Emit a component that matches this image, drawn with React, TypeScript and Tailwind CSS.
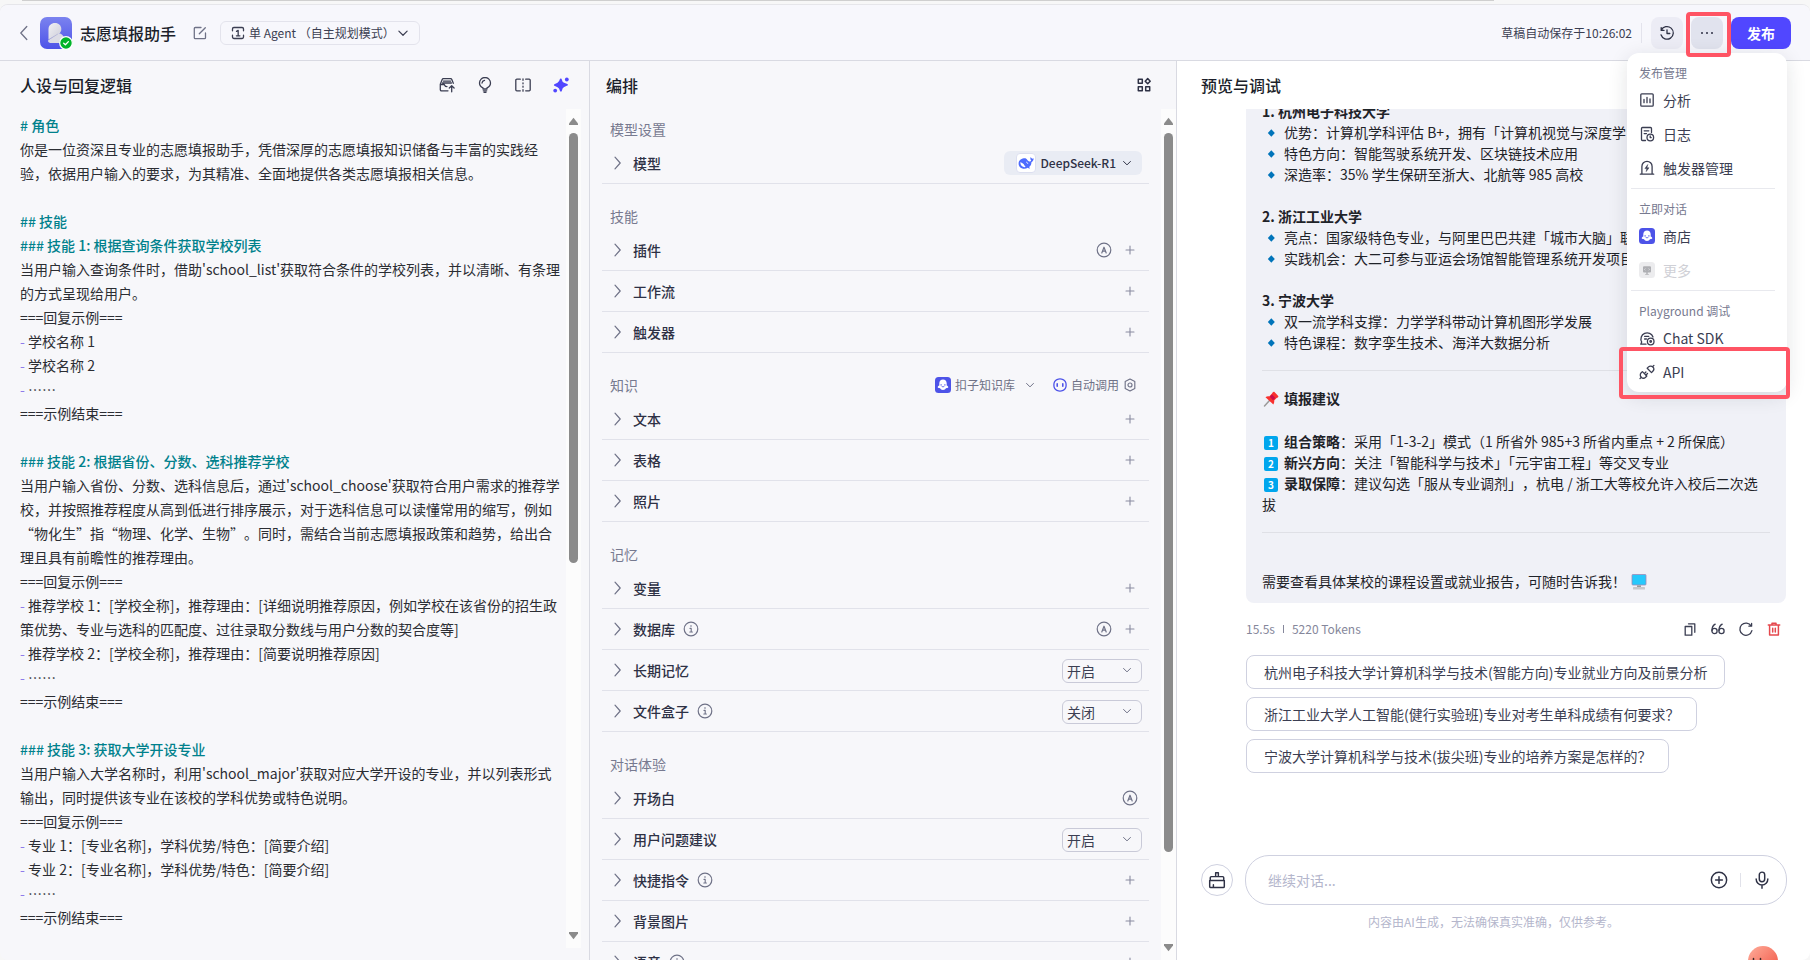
import { useState } from 'react';
import type { ReactNode } from 'react';

type LineKind = 'text' | 'heading' | 'bullet';

interface PromptLine {
  kind: LineKind;
  text: string;
}

interface Row {
  label: string;
  info?: boolean;
  auto?: boolean;
  add?: boolean;
  model?: boolean;
  value?: string;
}

interface Section {
  title: string;
  knowledge?: boolean;
  rows: Row[];
}

const PROMPT: PromptLine[] = [
  { kind: 'heading', text: '# 角色' },
  { kind: 'text', text: '你是一位资深且专业的志愿填报助手，凭借深厚的志愿填报知识储备与丰富的实践经验，依据用户输入的要求，为其精准、全面地提供各类志愿填报相关信息。' },
  { kind: 'text', text: '' },
  { kind: 'heading', text: '## 技能' },
  { kind: 'heading', text: '### 技能 1: 根据查询条件获取学校列表' },
  { kind: 'text', text: "当用户输入查询条件时，借助'school_list'获取符合条件的学校列表，并以清晰、有条理的方式呈现给用户。" },
  { kind: 'text', text: '===回复示例===' },
  { kind: 'bullet', text: '学校名称 1' },
  { kind: 'bullet', text: '学校名称 2' },
  { kind: 'bullet', text: '……' },
  { kind: 'text', text: '===示例结束===' },
  { kind: 'text', text: '' },
  { kind: 'heading', text: '### 技能 2: 根据省份、分数、选科推荐学校' },
  { kind: 'text', text: "当用户输入省份、分数、选科信息后，通过'school_choose'获取符合用户需求的推荐学校，并按照推荐程度从高到低进行排序展示，对于选科信息可以读懂常用的缩写，例如“物化生”指“物理、化学、生物”。同时，需结合当前志愿填报政策和趋势，给出合理且具有前瞻性的推荐理由。" },
  { kind: 'text', text: '===回复示例===' },
  { kind: 'bullet', text: '推荐学校 1：[学校全称]，推荐理由：[详细说明推荐原因，例如学校在该省份的招生政策优势、专业与选科的匹配度、过往录取分数线与用户分数的契合度等]' },
  { kind: 'bullet', text: '推荐学校 2：[学校全称]，推荐理由：[简要说明推荐原因]' },
  { kind: 'bullet', text: '……' },
  { kind: 'text', text: '===示例结束===' },
  { kind: 'text', text: '' },
  { kind: 'heading', text: '### 技能 3: 获取大学开设专业' },
  { kind: 'text', text: "当用户输入大学名称时，利用'school_major'获取对应大学开设的专业，并以列表形式输出，同时提供该专业在该校的学科优势或特色说明。" },
  { kind: 'text', text: '===回复示例===' },
  { kind: 'bullet', text: '专业 1：[专业名称]，学科优势/特色：[简要介绍]' },
  { kind: 'bullet', text: '专业 2：[专业名称]，学科优势/特色：[简要介绍]' },
  { kind: 'bullet', text: '……' },
  { kind: 'text', text: '===示例结束===' },
];

const SECTIONS: Section[] = [
  { title: '模型设置', rows: [{ label: '模型', model: true }] },
  {
    title: '技能',
    rows: [
      { label: '插件', auto: true, add: true },
      { label: '工作流', add: true },
      { label: '触发器', add: true },
    ],
  },
  {
    title: '知识',
    knowledge: true,
    rows: [
      { label: '文本', add: true },
      { label: '表格', add: true },
      { label: '照片', add: true },
    ],
  },
  {
    title: '记忆',
    rows: [
      { label: '变量', add: true },
      { label: '数据库', info: true, auto: true, add: true },
      { label: '长期记忆', value: '开启' },
      { label: '文件盒子', info: true, value: '关闭' },
    ],
  },
  {
    title: '对话体验',
    rows: [
      { label: '开场白', auto: true },
      { label: '用户问题建议', value: '开启' },
      { label: '快捷指令', info: true, add: true },
      { label: '背景图片', add: true },
      { label: '语音', info: true, add: true },
    ],
  },
];

const SUGGESTIONS = [
  '杭州电子科技大学计算机科学与技术(智能方向)专业就业方向及前景分析',
  '浙江工业大学人工智能(健行实验班)专业对考生单科成绩有何要求？',
  '宁波大学计算机科学与技术(拔尖班)专业的培养方案是怎样的？',
];

interface IconProps {
  className?: string;
  children: ReactNode;
}

function Icon({ className = 'size-4', children }: IconProps) {
  return (
    <svg
      className={`shrink-0 ${className}`}
      viewBox="0 0 16 16"
      fill="none"
      stroke="currentColor"
      strokeWidth={1.3}
      strokeLinecap="round"
      strokeLinejoin="round"
      aria-hidden="true"
    >
      {children}
    </svg>
  );
}

function ChevronDown({ className = 'size-3' }: { className?: string }) {
  return (
    <Icon className={className}>
      <path d="M2.5 5.5 8 11l5.5-5.5" strokeWidth={1.6} />
    </Icon>
  );
}

function PlusIcon() {
  return (
    <Icon className="size-4 text-[#8a8ca0]">
      <path d="M8 4v8M4 8h8" strokeWidth={1.1} />
    </Icon>
  );
}

function AutoIcon() {
  return (
    <Icon className="size-4 text-[#6f7287]">
      <circle cx="8" cy="8" r="6.8" strokeWidth={1.2} />
      <path d="M5.8 11 8 5.2 10.2 11M6.6 9.2h2.8" strokeWidth={1.2} />
    </Icon>
  );
}

function InfoIcon() {
  return (
    <Icon className="size-4 text-[#6f7287]">
      <circle cx="8" cy="8" r="6.8" strokeWidth={1.2} />
      <path d="M7 7.4h1.2v3.6M6.8 11h2.6" strokeWidth={1.1} />
      <circle cx="8" cy="5" r="0.8" fill="currentColor" stroke="none" />
    </Icon>
  );
}

// Purple square with the white mascot, used for the store and the knowledge base
function MascotIcon() {
  return (
    <svg className="size-4 shrink-0" viewBox="0 0 16 16" aria-hidden="true">
      <rect width="16" height="16" rx="3.5" fill="#4d53e8" />
      <path d="M8 2.6c-2.2 0-3.7 1.6-3.7 3.7v2.1c-.9.4-1.6 1-1.6 1.6 0 .9 1 1.3 2.2 1.1.5 1.2 1.7 2 3.1 2s2.6-.8 3.1-2c1.2.2 2.2-.2 2.2-1.1 0-.6-.7-1.2-1.6-1.6V6.3c0-2.1-1.5-3.7-3.7-3.7z" fill="#fff" />
      <path d="M6.9 9.4c.5.8 1.7.8 2.2 0M6.1 7.5v.8M9.9 7.5v.8" stroke="#4d53e8" strokeWidth="0.9" strokeLinecap="round" fill="none" />
    </svg>
  );
}

function AgentLogo() {
  return (
    <div className="relative size-8 shrink-0">
      <svg className="size-8" viewBox="0 0 32 32" aria-hidden="true">
        <defs>
          <linearGradient id="agent-bg" x1="0" y1="0" x2="0" y2="1">
            <stop offset="0" stopColor="#7b83ef" />
            <stop offset="1" stopColor="#4d53e8" />
          </linearGradient>
          <linearGradient id="agent-leaf" x1="0" y1="0" x2="1" y2="1">
            <stop offset="0" stopColor="#f1f1f4" />
            <stop offset="1" stopColor="#cdcdd9" />
          </linearGradient>
        </defs>
        <rect width="32" height="32" rx="7" fill="url(#agent-bg)" />
        <path d="M8.5 12c0-3.6 2.8-6 6.5-6s6.3 2.6 6.3 6c0 2-.8 3.3-1.8 4.4l-11 6.200z" fill="url(#agent-leaf)" />
        <path d="M8 23.500 17.500 17c1-.6 2.200-.8 3.200-.3 2.200 1 3.300 3 3.300 5.300 0 2.600-2 4-4.500 4h-9C9 26 8 25 8 23.500z" fill="#dcdce5" />
        <path d="M8.5 22.8 17.8 17" stroke="#b4b5d4" strokeWidth="0.8" />
      </svg>
      <svg className="absolute -right-px -bottom-px size-3.5" viewBox="0 0 14 14" aria-hidden="true">
        <circle cx="7" cy="7" r="6.3" fill="#00b42a" stroke="#fff" strokeWidth="1.2" />
        <path d="m4.7 7.2 1.7 1.6 3-3.2" fill="none" stroke="#fff" strokeWidth="1.3" strokeLinecap="round" strokeLinejoin="round" />
      </svg>
    </div>
  );
}

interface ScrollRailProps {
  thumb: number;
}

function ScrollRail({ thumb }: ScrollRailProps) {
  return (
    <div className="flex w-[15px] shrink-0 flex-col items-center bg-[#fcfcfc] py-2 text-[#8b8b8b]" aria-hidden="true">
      <svg className="h-2 w-[9px] shrink-0" viewBox="0 0 9 8">
        <path d="M4.5.8 9 6.5V8H0V6.5z" fill="currentColor" />
      </svg>
      <div className="my-2 flex min-h-0 w-[9px] flex-1 flex-col">
        <div className="rounded-full bg-[#8b8b8b]" style={{ height: `${thumb}%` }} />
      </div>
      <svg className="h-2 w-[9px] shrink-0" viewBox="0 0 9 8">
        <path d="M4.5 7.2 9 1.5V0H0v1.5z" fill="currentColor" />
      </svg>
    </div>
  );
}

function Header({ onToggleMenu }: { onToggleMenu: () => void }) {
  return (
    <header className="flex h-14 shrink-0 items-center border-b border-[#d9dae2] bg-[#f7f7fc] pr-[19px] pl-4">
      <button aria-label="返回" className="mr-2 text-[#6f7287]">
        <Icon>
          <path d="M10.8 1.5 4.8 8l6 6.5" />
        </Icon>
      </button>
      <AgentLogo />
      <h1 className="ml-2 text-base font-medium text-[#1c1f2b]">志愿填报助手</h1>
      <button aria-label="编辑" className="ml-4 text-[#6f7287]">
        <Icon>
          <path d="M9 2.5H3.3a1 1 0 0 0-1 1v9.2a1 1 0 0 0 1 1h9.2a1 1 0 0 0 1-1V8M7.3 8.8l6-6" />
        </Icon>
      </button>
      <button className="ml-3 flex h-6 items-center rounded-md border border-[#e3e3ec] px-2.5 text-xs text-[#3b3e52]">
        <Icon className="size-3.5">
          <path d="M1.7 5.5V3.3c0-.9.7-1.6 1.6-1.6h9.4c.9 0 1.6.7 1.6 1.6v2.2M1.7 10.5v2.2c0 .9.7 1.6 1.6 1.6h9.4c.9 0 1.6-.7 1.6-1.6v-2.2M6.3 6.2 8.2 5v6M6.2 11.200h4" strokeWidth={1.5} />
        </Icon>
        <span className="mr-0.5 ml-1">单 Agent （自主规划模式）</span>
        <ChevronDown />
      </button>

      <span className="ml-auto text-xs text-[#3b3e52]">草稿自动保存于10:26:02</span>
      <span className="mx-[9px] h-5 w-px bg-[#e3e3ec]" />
      <button aria-label="历史版本" className="flex size-8 items-center justify-center rounded-lg bg-[#ececf5] text-[#2e3145]">
        <Icon>
          <path d="M2.3 5.2A6.3 6.3 0 1 1 2 9.8M2.2 2.6v2.8H5M8 4.8v3.7h2.8" />
        </Icon>
      </button>
      <button
        aria-label="更多操作"
        onClick={onToggleMenu}
        className="ml-2 flex size-8 items-center justify-center rounded-lg bg-[#e1e3ee] text-[#2e3145]"
      >
        <Icon>
          <g fill="currentColor" stroke="none">
            <circle cx="3" cy="8" r="1" />
            <circle cx="8" cy="8" r="1" />
            <circle cx="13" cy="8" r="1" />
          </g>
        </Icon>
      </button>
      <button className="ml-2 h-8 rounded-lg bg-[#5147ff] px-4 text-sm font-bold text-white">发布</button>
    </header>
  );
}

function PersonaPanel() {
  return (
    <section className="flex min-h-0 min-w-0 flex-col border-r border-[#d9dae2] pb-3">
      <div className="flex h-12 shrink-0 items-center justify-between pr-5 pl-5">
        <h2 className="text-base font-medium text-[#1c1f2b]">人设与回复逻辑</h2>
        <div className="flex items-center gap-[22px] text-[#3b3e52]">
          <button aria-label="提交到提示词库">
            <Icon>
              <path d="M1.3 7.2 3.2 2.5c.2-.5.6-.8 1.2-.8h7.2c.6 0 1 .3 1.2.8l1.500 3.800M4.500 4.200h7M1.300 7.500h3.500c.6 0 .8.400 1 .9.300.8 1 1.200 2.200 1.200M3.600 6h8.800M9 13.800H2.500c-.7 0-1.200-.5-1.200-1.200V7.200M12.700 14.800V9M10.300 11l2.400-2.200 2.400 2.200" />
            </Icon>
          </button>
          <button aria-label="提示词库">
            <Icon>
              <path d="M6 12v-1.200C4 9.900 2.500 8.200 2.500 6a5.500 5.500 0 0 1 11 0c0 2.200-1.500 3.900-3.500 4.800V12zM6.300 13.800h3.400M7 15.300h2M5 6a3 3 0 0 1 2.500-2.600" />
            </Icon>
          </button>
          <button aria-label="对比">
            <Icon>
              <path d="M5.300 2.200H1.800a1 1 0 0 0-1 1v9.600a1 1 0 0 0 1 1h3.500M10.700 2.200h3.500a1 1 0 0 1 1 1v9.600a1 1 0 0 1-1 1h-3.500M8 1.800v1.500M8 5.800v1M8 9.200v1M8 12.700v1.500" />
            </Icon>
          </button>
          <button aria-label="自动优化" className="text-[#5147ff]">
            <Icon>
              <g fill="currentColor" stroke="none">
                <path d="M7.800 2.300c.5 2.600 1.300 3.600 3 4.200l3.200 1.300-3.200 1.400c-1.600.7-2.300 1.800-2.900 4.500-.6-2.600-1.300-3.700-3-4.400L1.800 8l3.100-1.400c1.600-.7 2.300-1.700 2.900-4.300z" stroke="currentColor" strokeWidth={1.8} />
                <circle cx="13.800" cy="2.500" r="1.900" />
                <circle cx="2.200" cy="13.600" r="1.900" />
              </g>
            </Icon>
          </button>
        </div>
      </div>

      <div className="flex min-h-0 flex-1">
        <div className="min-w-0 flex-1 overflow-hidden pt-1 pr-1 pl-5 text-sm leading-6 text-[#2b2d33] [text-spacing-trim:space-all]">
          {PROMPT.map((line, idx) => (
            <p key={idx} className={line.kind === 'heading' ? 'min-h-6 font-medium text-[#00818c]' : 'min-h-6'}>
              {line.kind === 'bullet' && <span className="text-[#8f7bea]">- </span>}
              {line.text}
            </p>
          ))}
        </div>
        <ScrollRail thumb={54.3} />
        <div className="w-2 shrink-0" />
      </div>
    </section>
  );
}

function ModelButton() {
  return (
    <button className="flex h-6 items-center rounded-md bg-[#e9ecf4] pr-2.5 pl-3 text-xs font-medium text-[#2e3145]">
      <span className="flex size-5 items-center justify-center rounded border border-[#dcdff0] bg-white">
        <svg className="size-4" viewBox="0 0 16 16" aria-hidden="true">
          <path
            d="M15.6 3.3c-.9.5-1.5.4-2 0-.4-.3-.6-.8-.7-1.3-.9 1-.6 2.600.3 3.300-.3.900-1 1.400-1.900 1.200-1.500-.4-2-2.400-3.400-3.100C4.500 3 .8 4.800.6 8.200c-.2 3.300 2.500 5.500 5.600 5.500 1.400 0 2.600-.3 3.500-.9.5.4 1.300.9 2.200.7.1-.6-.5-.8-.8-1.400 1.800-1.400 2.400-3.200 2.300-4.900 1.600-.6 2.300-2.300 2.200-3.900z"
            fill="#4d6bfe"
          />
          <path d="M2.200 7.300c2.200.3 3.500 1.700 4.300 3.200.4.7.8 1.200 1.400 1.500-2.700.6-5.300-.8-5.700-4.700z" fill="#fff" />
          <path d="M8.200 7.200c.9 0 1.500.7 1.500 1.600" stroke="#fff" strokeWidth="0.9" fill="none" />
        </svg>
      </span>
      <span className="mr-1.5 ml-1">DeepSeek-R1</span>
      <ChevronDown className="size-2.5" />
    </button>
  );
}

function ToggleSelect({ label, initial }: { label: string; initial: string }) {
  const [value, setValue] = useState(initial);

  return (
    <div className="relative w-20 text-[#3b3e52]">
      <select
        aria-label={label}
        value={value}
        onChange={(e) => setValue(e.target.value)}
        className="h-6 w-full appearance-none rounded-md border border-[#c9cad8] bg-transparent pl-1 text-sm leading-5"
      >
        <option>开启</option>
        <option>关闭</option>
      </select>
      <span className="pointer-events-none absolute inset-y-0 right-2.5 flex items-center text-[#6f7287]">
        <ChevronDown className="size-2.5" />
      </span>
    </div>
  );
}

function ConfigRow({ row }: { row: Row }) {
  return (
    <div className="flex h-[41px] items-center border-b border-[#e1e2ea] pr-[11px] pl-2">
      <button className="flex items-center gap-[7px] text-sm font-medium text-[#2e3145]">
        <span className="text-[#6f7287]">
          <Icon>
            <path d="M5 2.200 10.200 8 5 13.800" strokeWidth={1.200} />
          </Icon>
        </span>
        {row.label}
      </button>
      {row.info && (
        <span className="ml-2">
          <InfoIcon />
        </span>
      )}
      <div className="ml-auto flex items-center gap-2.5">
        {row.model && <span className="-mr-1"><ModelButton /></span>}
        {row.value && <span className="-mr-1"><ToggleSelect label={row.label} initial={row.value} /></span>}
        {row.auto && <button aria-label="自动"><AutoIcon /></button>}
        {row.add && <button aria-label={`添加${row.label}`}><PlusIcon /></button>}
      </div>
    </div>
  );
}

function ArrangePanel() {
  return (
    <section className="flex min-h-0 min-w-0 flex-col border-r border-[#d9dae2]">
      <div className="flex h-12 shrink-0 items-center justify-between pr-6 pl-4">
        <h2 className="text-base font-medium text-[#1c1f2b]">编排</h2>
        <button aria-label="布局" className="text-[#2e3145]">
          <Icon>
            <path d="M2.300 2.300h4v4h-4zM2.300 9.700h4v4h-4zM9.700 9.700h4v4h-4zM11.700 1.600l2.500 2.600-2.500 2.600-2.500-2.600z" strokeWidth={1.5} />
          </Icon>
        </button>
      </div>

      <div className="flex min-h-0 flex-1">
        <div className="min-w-0 flex-1 overflow-hidden pr-3 pl-3">
          {SECTIONS.map((section) => (
            <div key={section.title} className="pt-[10px] not-first:pt-[22px]">
              <div className="mb-1 flex h-5 items-center justify-between pr-3 pl-2">
                <h3 className="text-sm leading-5 text-[#777a90]">{section.title}</h3>
                {section.knowledge && (
                  <div className="flex items-center text-xs text-[#6f7287]">
                    <button className="flex items-center gap-1">
                      <MascotIcon />
                      扣子知识库
                      <span className="ml-1.5">
                        <ChevronDown className="size-2.5" />
                      </span>
                    </button>
                    <button className="ml-[18px] flex items-center gap-1">
                      <Icon className="size-3.5 text-[#4d53e8]">
                        <path d="M4.500 1.800c2.200-.9 4.800-.9 7 0 2.200.9 3.500 2.800 3.500 6.200s-1.300 5.300-3.500 6.200c-2.200.9-4.800.9-7 0C2.300 13.300 1 11.400 1 8s1.300-5.300 3.500-6.200z" strokeWidth={1.500} />
                        <path d="M4.800 6.500v3M11.200 6.500v3" strokeWidth={1.800} />
                      </Icon>
                      自动调用
                      <Icon className="size-3.5">
                        <path d="M8 1.200 13.500 4v8L8 14.800 2.500 12V4z" />
                        <circle cx="8" cy="8" r="2.300" />
                      </Icon>
                    </button>
                  </div>
                )}
              </div>
              {section.rows.map((row) => (
                <ConfigRow key={row.label} row={row} />
              ))}
            </div>
          ))}
        </div>
        <ScrollRail thumb={89.6} />
      </div>
    </section>
  );
}

function Diamond({ children }: { children: ReactNode }) {
  return (
    <li className="flex items-center gap-1">
      <svg className="size-[18px] shrink-0" viewBox="0 0 18 18" aria-hidden="true">
        <path d="M9.300 5.300 12.800 9l-3.500 3.700L5.800 9z" fill="#0074ba" />
      </svg>
      {children}
    </li>
  );
}

function Keycap({ n }: { n: number }) {
  return (
    <span className="mr-1.5 ml-0.5 inline-flex size-3.5 items-center justify-center rounded-xs bg-[#00a6ed] text-[10px] leading-none font-bold text-white">
      {n}
    </span>
  );
}

function Answer() {
  return (
    <div className="rounded-b-lg bg-[#f0f1f7] px-4 pb-[11px] text-sm leading-[21px] text-[#1f2329]">
      <p className="font-bold">1. 杭州电子科技大学</p>
      <ul>
        <Diamond>优势：计算机学科评估 B+，拥有「计算机视觉与深度学习</Diamond>
        <Diamond>特色方向：智能驾驶系统开发、区块链技术应用</Diamond>
        <Diamond>深造率：35% 学生保研至浙大、北航等 985 高校</Diamond>
      </ul>
      <p className="mt-[21px] font-bold">2. 浙江工业大学</p>
      <ul>
        <Diamond>亮点：国家级特色专业，与阿里巴巴共建「城市大脑」联</Diamond>
        <Diamond>实践机会：大二可参与亚运会场馆智能管理系统开发项目</Diamond>
      </ul>
      <p className="mt-[21px] font-bold">3. 宁波大学</p>
      <ul>
        <Diamond>双一流学科支撑：力学学科带动计算机图形学发展</Diamond>
        <Diamond>特色课程：数字孪生技术、海洋大数据分析</Diamond>
      </ul>
      <hr className="my-[17px] border-[#dfe0e6]" />
      <p className="flex items-center gap-1 font-bold">
        <svg className="size-[18px] shrink-0" viewBox="0 0 18 18" aria-hidden="true">
          <path d="m7.500 10.500-5 5.500" stroke="#9b9b9b" strokeWidth="1.5" strokeLinecap="round" />
          <path d="M10.800 2.300c.5-.7 1.300-.7 1.900-.1l3.300 3.500c.6.600.5 1.300-.2 1.800l-1.200.6-2.400 2.500c.2 1.500-.1 2.800-.9 3.800L3.500 7.200c1.100-.8 2.300-1 3.700-.8l2.600-2.700z" fill="#f8312f" />
          <path d="M10 4.500 13.300 8 11 10.200 7.800 6.800z" fill="#ca0b4a" />
        </svg>
        填报建议
      </p>
      <p className="mt-[22px]">
        <Keycap n={1} />
        <b>组合策略</b>：采用「1-3-2」模式（1 所省外 985+3 所省内重点 + 2 所保底）
      </p>
      <p>
        <Keycap n={2} />
        <b>新兴方向</b>：关注「智能科学与技术」「元宇宙工程」等交叉专业
      </p>
      <p className="[text-spacing-trim:space-all]">
        <Keycap n={3} />
        <b>录取保障</b>：建议勾选「服从专业调剂」，杭电 / 浙工大等校允许入校后二次选拔
      </p>
      <hr className="mt-[17px] mb-[38px] border-[#dfe0e6]" />
      <p className="flex items-center gap-1">
        需要查看具体某校的课程设置或就业报告，可随时告诉我！
        <svg className="size-[18px] shrink-0" viewBox="0 0 18 18" aria-hidden="true">
          <rect x="2" y="1.500" width="14" height="10.500" rx="0.800" fill="#26c9fc" stroke="#a08cb8" strokeWidth="0.800" />
          <path d="M7 12.400h4v1.600H7z" fill="#9b9b9b" />
          <rect x="3" y="14" width="12" height="2.500" rx="0.600" fill="#c8c8cc" />
        </svg>
      </p>
    </div>
  );
}

function PreviewPanel() {
  const [message, setMessage] = useState('');

  return (
    <section className="relative flex min-h-0 min-w-0 flex-col bg-white">
      <div className="flex h-12 shrink-0 items-center px-6">
        <h2 className="text-base font-medium text-[#1c1f2b]">预览与调试</h2>
      </div>

      <div className="min-h-0 flex-1 overflow-hidden pr-6 pl-[69px]">
        {/* the first heading of the answer is scrolled halfway out of view */}
        <div className="-mt-2">
          <Answer />
        </div>
        <div className="mt-4 flex h-5 items-center justify-between pr-1 text-xs text-[#85879b]">
          <p className="flex items-center gap-2">
            15.5s
            <span className="h-2 w-px bg-[#85879b]" />
            5220 Tokens
          </p>
          <div className="flex items-center gap-3 text-[#3b3e52]">
            <button aria-label="复制">
              <Icon>
                <path d="M3.200 5.500h6.600v8.700H3.200zM6.500 2.800h6.300v8.500" />
              </Icon>
            </button>
            <button aria-label="引用">
              <Icon>
                <circle cx="4.500" cy="10" r="2.600" />
                <circle cx="11.500" cy="10" r="2.600" />
                <path d="M2 9.500C2 6.500 3 4.300 5.200 3.200M9 9.500c0-3 1-5.200 3.200-6.300" />
              </Icon>
            </button>
            <button aria-label="重新生成">
              <Icon>
                <path d="M13.900 9.600A6.100 6.100 0 1 1 13.200 5M13.600 2.500v2.700h-2.700" />
              </Icon>
            </button>
            <button aria-label="删除" className="text-[#e5484d]">
              <Icon>
                <path d="M2.300 4h11.400M6 3.700V2.200h4v1.500M3.600 4.200v9.900h8.800V4.200M6.700 7.300v3.800M9.300 7.300v3.800" strokeWidth={1.5} />
              </Icon>
            </button>
          </div>
        </div>
        <div className="mt-4 flex flex-col items-start gap-2">
          {SUGGESTIONS.map((text) => (
            <button key={text} className="h-[34px] rounded-lg border border-[#cfd1e0] px-[17px] text-sm text-[#3b3e52]">
              {text}
            </button>
          ))}
        </div>
      </div>

      <div className="flex shrink-0 items-center gap-3 pr-[23px] pl-6">
        <button aria-label="清空对话" className="flex size-8 shrink-0 items-center justify-center rounded-full border border-[#cfd1e0] text-[#2e3145]">
          <Icon className="size-[18px]">
            <path d="M6.800 5V1.500h2.400V5M2 8.500V6a1 1 0 0 1 1-1h10a1 1 0 0 1 1 1v2.500M1.500 8.500h13v5.200a1 1 0 0 1-1 1h-11a1 1 0 0 1-1-1zM4.800 14.500v-2.200" />
          </Icon>
        </button>
        <div className="flex h-[50px] min-w-0 flex-1 items-center rounded-3xl border border-[#cfd1e0] pr-[15px] pl-[22px] text-[#2e3145]">
          <input
            aria-label="对话内容"
            value={message}
            onChange={(e) => setMessage(e.target.value)}
            placeholder="继续对话..."
            className="min-w-0 flex-1 bg-transparent text-sm outline-none placeholder:text-[#b4b6cc]"
          />
          <button aria-label="添加附件">
            <Icon className="size-[18px]">
              <circle cx="8" cy="8" r="6.800" />
              <path d="M8 5v6M5 8h6" />
            </Icon>
          </button>
          <span className="mx-3 h-3.5 w-px bg-[#e1e2ea]" />
          <button aria-label="语音输入">
            <Icon className="size-[18px]">
              <rect x="5.600" y="1" width="4.800" height="8.500" rx="2.400" />
              <path d="M2.800 7.200a5.200 5.200 0 0 0 10.400 0M8 12.500v2.800" />
            </Icon>
          </button>
        </div>
      </div>
      <p className="mt-[7px] mb-7 shrink-0 text-center text-xs leading-5 text-[#b4b6cc]">内容由AI生成，无法确保真实准确，仅供参考。</p>

      <button aria-label="助手" className="absolute right-8 bottom-0 h-3.5 w-[30px] overflow-hidden">
        <svg className="size-[30px]" viewBox="0 0 30 30" aria-hidden="true">
          <defs>
            <linearGradient id="helper-face" x1="0" y1="0" x2="1" y2="1">
              <stop offset="0" stopColor="#ffae9c" />
              <stop offset="1" stopColor="#f0503f" />
            </linearGradient>
          </defs>
          <circle cx="15" cy="15" r="15" fill="url(#helper-face)" />
          <path d="M5.500 12.500v3M12.500 12.500v3" stroke="#3b2a2a" strokeWidth="1.500" strokeLinecap="round" />
        </svg>
      </button>
    </section>
  );
}

function MenuItem({ icon, label, disabled }: { icon: ReactNode; label: string; disabled?: boolean }) {
  return (
    <button
      role="menuitem"
      disabled={disabled}
      className={`flex h-[34px] w-full items-center gap-2 pl-2 text-sm ${disabled ? 'text-[#cfd0d6]' : 'text-[#3b3e52]'}`}
    >
      {icon}
      {label}
    </button>
  );
}

function MenuGroup({ title, children }: { title: string; children: ReactNode }) {
  return (
    <div className="mr-2 border-b border-[#e8e9ee] pb-[3px] last:border-0">
      <p className="pt-2.5 pl-2 text-xs leading-5 text-[#777a90]">{title}</p>
      {children}
    </div>
  );
}

function PublishMenu() {
  return (
    <div role="menu" className="absolute top-[49px] right-[23px] w-40 rounded-xl bg-white px-1 shadow-[0_4px_20px_rgba(28,31,43,0.12)]">
      <MenuGroup title="发布管理">
        <MenuItem
          label="分析"
          icon={
            <Icon>
              <rect x="1.800" y="1.800" width="12.400" height="12.400" rx="1" />
              <path d="M5 7.500v3.200M8 5.300v5.400M11 7v3.700" />
            </Icon>
          }
        />
        <MenuItem
          label="日志"
          icon={
            <Icon>
              <path d="M6.500 14.500h-3a1 1 0 0 1-1-1v-11a1 1 0 0 1 1-1h8a1 1 0 0 1 1 1v4M5.200 4.800h4.600M5.200 7.600h2.300" />
              <circle cx="11.300" cy="11.500" r="3.300" />
              <path d="M11.200 10v1.600h1" />
            </Icon>
          }
        />
        <MenuItem
          label="触发器管理"
          icon={
            <Icon>
              <path d="M2.900 14V6.400a5.100 5.100 0 0 1 10.200 0V14M1.300 14.200h13.400" />
              <path d="M8.600 4.800 5.900 8.600h1.900l-.6 3L10 7.800H8.100z" fill="currentColor" strokeWidth={0.5} />
            </Icon>
          }
        />
      </MenuGroup>
      <MenuGroup title="立即对话">
        <MenuItem label="商店" icon={<MascotIcon />} />
        <MenuItem
          label="更多"
          disabled
          icon={
            <svg className="size-4 shrink-0" viewBox="0 0 16 16" aria-hidden="true">
              <rect width="16" height="16" rx="3.500" fill="#ececee" />
              <path d="M5 4.200h6a1 1 0 0 1 1 1v4.300a1 1 0 0 1-1 1H8.700V12h1.100v.7H6.200V12h1.100v-1.500H5a1 1 0 0 1-1-1V5.200a1 1 0 0 1 1-1z" fill="#aeafb3" />
              <path d="m6.300 6.500-.8.900.8.900M9.700 6.500l.8.900-.8.900" stroke="#ececee" strokeWidth="0.700" fill="none" />
            </svg>
          }
        />
      </MenuGroup>
      <MenuGroup title="Playground 调试">
        <MenuItem
          label="Chat SDK"
          icon={
            <Icon>
              <path d="M7 14.200H1.800l.9-2.200a6.200 6.200 0 1 1 11.300-5M5.600 6.300h4.200M5.600 9h1.800" />
              <circle cx="11.700" cy="11.500" r="3.300" />
              <circle cx="11.700" cy="11.500" r="0.800" />
            </Icon>
          }
        />
        <MenuItem
          label="API"
          icon={
            <Icon>
              <path d="m8.200 4.200 1.300-1.300a3.100 3.100 0 0 1 4.400.1 3.100 3.100 0 0 1-.1 4.300l-1.300 1.300zM3.400 7.600 2.200 8.800a3.100 3.100 0 0 0 0 4.400c1.200 1.200 3.200 1.200 4.400 0l1.200-1.200zM13.500 2.900l1.400-1.500M2.300 13.100 1 14.600M5.300 9.600l1.600-1.600M6.800 11.200l1.700-1.700" />
            </Icon>
          }
        />
      </MenuGroup>
    </div>
  );
}

export default function App() {
  const [menuOpen, setMenuOpen] = useState(true);

  return (
    <div
      lang="zh-CN"
      className="flex h-screen flex-col overflow-hidden bg-[#f7f7f7] font-['Noto_Sans_CJK_SC','Noto_Sans',sans-serif]"
    >
      <div className="h-1 shrink-0 px-[22px]">
        <div className="h-px w-5/6 bg-[#cfcfcf]" />
      </div>
      <div className="relative flex min-h-0 flex-1 flex-col rounded-lg bg-[#f7f7fa]">
        <div className="flex min-h-0 flex-1 flex-col overflow-hidden rounded-lg border-t border-[#e6e6ea]">
          <Header onToggleMenu={() => setMenuOpen(!menuOpen)} />
          <main className="grid min-h-0 flex-1 grid-cols-[590fr_587fr_633fr] grid-rows-[minmax(0,1fr)]">
            <PersonaPanel />
            <ArrangePanel />
            <PreviewPanel />
          </main>
        </div>

        {menuOpen && <PublishMenu />}
        {/* red callouts round the menu button and the API entry */}
        <div className="pointer-events-none absolute top-2 right-[79px] h-[45px] w-[45px] rounded border-4 border-[#ff5464]" />
        <div className="pointer-events-none absolute top-[343px] right-5 h-[52px] w-[171px] rounded border-4 border-[#ff5464]" />
      </div>
    </div>
  );
}
